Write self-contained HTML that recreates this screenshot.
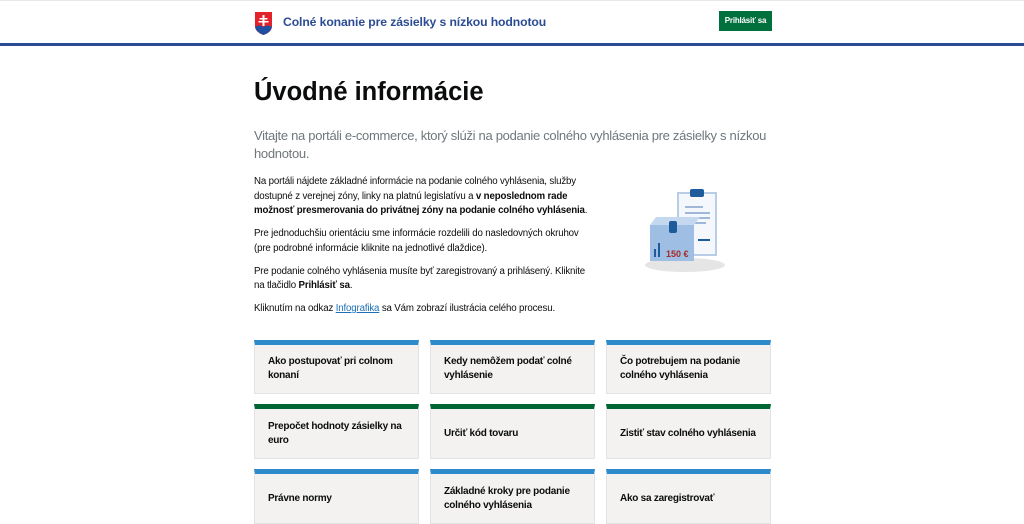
<!DOCTYPE html>
<html><head><meta charset="utf-8"><style>
*{box-sizing:border-box;margin:0;padding:0}
body{width:1024px;height:505px;overflow:hidden;background:#fff;font-family:"Liberation Sans",sans-serif;color:#0b0c0c}
.hdr{height:43px;border-top:1px solid #e8e8e8;position:relative}
.line{height:3px;background:#2b4c94}
.logo{position:absolute;left:255px;top:11px}
.ttl{position:absolute;left:283px;top:14px;font-size:12.2px;font-weight:bold;color:#2b4c94;letter-spacing:-0.1px}
.btn{position:absolute;left:719px;top:10px;width:53px;height:20px;background:#00703c;color:#fff;font-size:8px;font-weight:bold;text-align:center;line-height:20px;letter-spacing:-0.2px}
h1{position:absolute;left:254px;top:78px;font-size:25.5px;font-weight:bold}
.lead{position:absolute;left:254px;top:127px;width:525px;font-size:13px;line-height:18px;color:#6f777b;letter-spacing:-0.3px}
.txt{position:absolute;left:254px;top:175px;width:340px;font-size:9.7px;line-height:14.5px;letter-spacing:-0.15px}
.txt p{margin-bottom:8.5px}
.txt a{color:#1d70b8}
.card{position:absolute;width:165px;background:#f3f2f1;border:1px solid #e3e3e3;border-top:5px solid #2e8bcb;font-size:10px;font-weight:bold;line-height:14px;padding:0 13px;display:flex;align-items:center;letter-spacing:-0.25px}
.g{border-top-color:#006633}
</style></head><body>
<div class="hdr">
<svg class="logo" width="17" height="23" viewBox="0 0 17 23"><path d="M0 0H17V14Q17 20 8.5 23Q0 20 0 14Z" fill="#e4222b"/><path d="M0 15Q4 12 8.5 15Q13 12 17 15Q16 20 8.5 23Q1 20 0 15Z" fill="#1e4fa0"/><path d="M7.5 3h2v11h-2zM4.5 6h8v1.5h-8zM3.5 9h10v1.5h-10z" fill="#fff"/></svg>
<div class="ttl">Colné konanie pre zásielky s nízkou hodnotou</div>
<div class="btn">Prihlásiť sa</div>
</div>
<div class="line"></div>
<h1>Úvodné informácie</h1>
<div class="lead">Vitajte na portáli e-commerce, ktorý slúži na podanie colného vyhlásenia pre zásielky s nízkou hodnotou.</div>
<div class="txt">
<p>Na portáli nájdete základné informácie na podanie colného vyhlásenia, služby dostupné z verejnej zóny, linky na platnú legislatívu a <b>v neposlednom rade možnosť presmerovania do privátnej zóny na podanie colného vyhlásenia</b>.</p>
<p>Pre jednoduchšiu orientáciu sme informácie rozdelili do nasledovných okruhov<br>(pre podrobné informácie kliknite na jednotlivé dlaždice).</p>
<p>Pre podanie colného vyhlásenia musíte byť zaregistrovaný a prihlásený. Kliknite<br>na tlačidlo <b>Prihlásiť sa</b>.</p>
<p>Kliknutím na odkaz <a href="#">Infografika</a> sa Vám zobrazí ilustrácia celého procesu.</p>
</div>
<svg style="position:absolute;left:640px;top:185px" width="100" height="90" viewBox="0 0 100 90">
<ellipse cx="45" cy="80" rx="40" ry="7" fill="#e5e5e5"/>
<rect x="38" y="8" width="38" height="62" fill="#f4f8fc" stroke="#b9cde6" stroke-width="2"/>
<rect x="50" y="4" width="14" height="8" rx="2" fill="#1d5b9c"/>
<path d="M45 22h18M45 28h25M45 33h25M52 38h14" stroke="#9fb8d9" stroke-width="2"/>
<path d="M58 55h12" stroke="#1d5b9c" stroke-width="2"/>
<rect x="10" y="40" width="44" height="36" fill="#9ebfe3"/>
<path d="M10 40l6-8h44l-6 8z" fill="#c4d9ef"/>
<rect x="29" y="36" width="8" height="12" rx="2" fill="#1d5b9c"/>
<path d="M15 72v-8M19 72v-14" stroke="#1d5b9c" stroke-width="2"/>
<text x="26" y="72" font-size="9" font-weight="bold" fill="#a52a2a" font-family="Liberation Sans">150 €</text>
</svg>
<div class="card" style="left:254px;top:340px;height:54px">Ako postupovať pri colnom konaní</div>
<div class="card" style="left:430px;top:340px;height:54px">Kedy nemôžem podať colné vyhlásenie</div>
<div class="card" style="left:606px;top:340px;height:54px">Čo potrebujem na podanie colného vyhlásenia</div>
<div class="card g" style="left:254px;top:404px;height:55px">Prepočet hodnoty zásielky na euro</div>
<div class="card g" style="left:430px;top:404px;height:55px">Určiť kód tovaru</div>
<div class="card g" style="left:606px;top:404px;height:55px">Zistiť stav colného vyhlásenia</div>
<div class="card" style="left:254px;top:469px;height:55px">Právne normy</div>
<div class="card" style="left:430px;top:469px;height:55px">Základné kroky pre podanie colného vyhlásenia</div>
<div class="card" style="left:606px;top:469px;height:55px">Ako sa zaregistrovať</div>
</body></html>
